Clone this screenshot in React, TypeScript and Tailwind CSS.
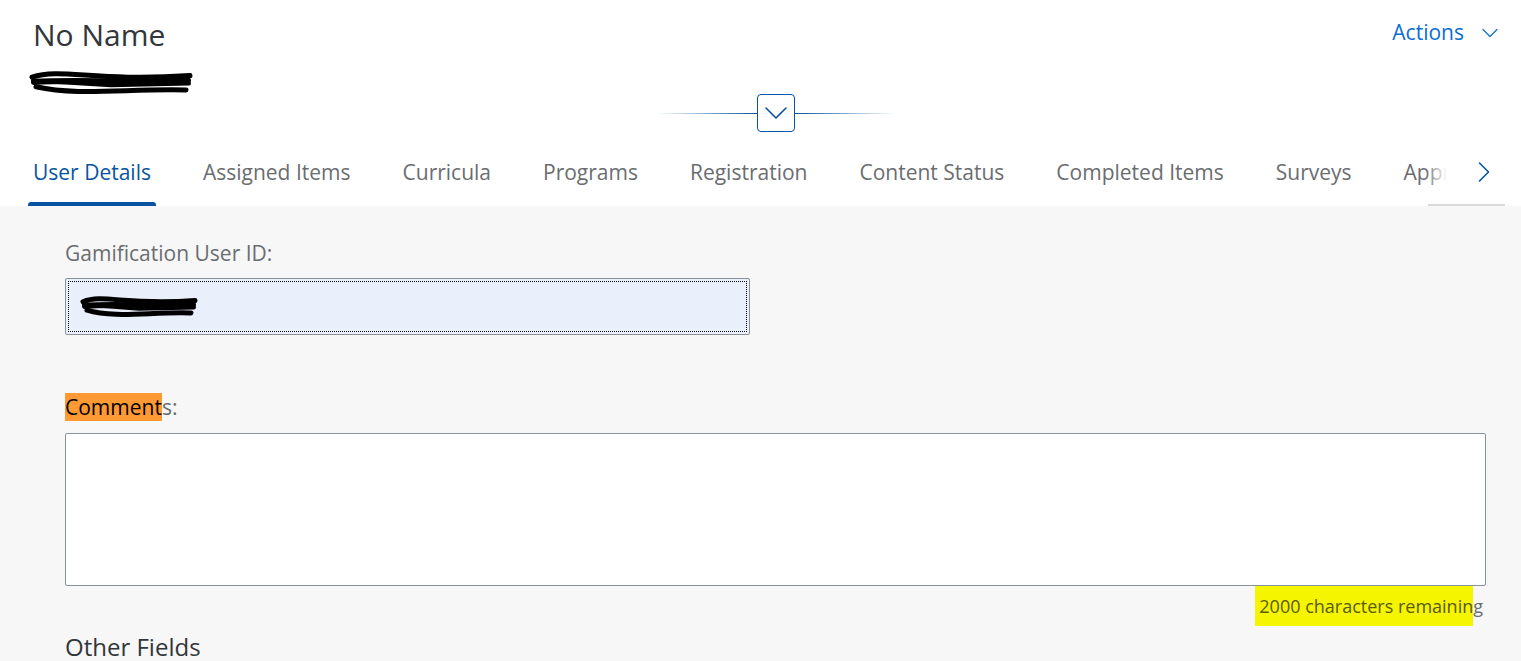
import { ChevronDown, ChevronRight } from 'lucide-react';

const tabs = [
  'User Details',
  'Assigned Items',
  'Curricula',
  'Programs',
  'Registration',
  'Content Status',
  'Completed Items',
  'Surveys',
  'Approvals',
];

const font = { fontFamily: '"Open Sans", "Noto Sans", Arial, sans-serif' };

// the black marker scribbles over redacted values
const Scribble = ({ w, h }: { w: number; h: number }) => (
  <svg width={w} height={h} viewBox={`0 0 ${w} ${h}`} fill="none">
    <path
      d={`M4 ${h * 0.35} C ${w * 0.2} ${h * 0.05}, ${w * 0.4} ${h * 0.5}, ${w - 4} ${h * 0.3}`}
      stroke="black"
      strokeWidth={5}
      strokeLinecap="round"
    />
    <path
      d={`M6 ${h * 0.5} C ${w * 0.3} ${h * 0.4}, ${w * 0.6} ${h * 0.55}, ${w - 6} ${h * 0.45}`}
      stroke="black"
      strokeWidth={6}
      strokeLinecap="round"
    />
    <path
      d={`M8 ${h * 0.65} C ${w * 0.3} ${h * 0.95}, ${w * 0.6} ${h * 0.7}, ${w - 8} ${h * 0.75}`}
      stroke="black"
      strokeWidth={5}
      strokeLinecap="round"
    />
    <path
      d={`M5 ${h * 0.45} L ${w * 0.5} ${h * 0.6} L ${w - 5} ${h * 0.55}`}
      stroke="black"
      strokeWidth={4}
      strokeLinecap="round"
    />
  </svg>
);

export default function App() {
  return (
    <div className="min-h-screen bg-[#f7f7f7] text-[#32363a]" style={font}>
      {/* header */}
      <div className="bg-white">
        <div className="flex items-start justify-between pl-[33px] pr-[17px] pt-[15px]">
          <div>
            <h1 className="text-[30px] leading-[40px] text-[#32363a]">No Name</h1>
            <div className="-ml-[5px] mt-[11px]">
              <Scribble w={166} h={32} />
            </div>
          </div>
          <button className="flex items-center gap-[12px] pt-[2px] text-[21px] text-[#0a6ed1]">
            Actions
            <ChevronDown size={28} strokeWidth={1.2} absoluteStrokeWidth />
          </button>
        </div>

        <div className="-mt-[4px] flex items-center justify-center pl-[30px]">
          <div className="h-px w-[100px] bg-gradient-to-r from-transparent to-[#0854a0]" />
          <button className="flex h-[38px] w-[38px] items-center justify-center overflow-hidden rounded-[4px] border border-[#0854a0] bg-white text-[#0854a0]">
            <ChevronDown size={40} strokeWidth={1.6} absoluteStrokeWidth className="shrink-0" />
          </button>
          <div className="h-px w-[100px] bg-gradient-to-l from-transparent to-[#0854a0]" />
        </div>

        <div className="mt-[11px] flex items-stretch pl-[28px]">
          <div className="relative flex flex-1 gap-[42px] overflow-hidden">
            {tabs.map((t, i) => (
              <div
                key={t}
                className={`relative shrink-0 px-[5px] pb-[17px] pt-[14px] text-[21px] ${
                  i === 0 ? 'text-[#0854a0]' : 'text-[#6a6d70]'
                }`}
              >
                {t}
                {i === 0 && (
                  <div className="absolute bottom-0 left-0 right-0 h-[4px] rounded-t-[3px] bg-[#0854a0]" />
                )}
              </div>
            ))}
            <div className="absolute right-0 top-0 bottom-0 w-[22px] bg-gradient-to-r from-transparent to-white" />
          </div>
          <div className="relative flex w-[74px] shrink-0 items-center">
            <ChevronRight size={36} strokeWidth={1.6} absoluteStrokeWidth className="ml-[19px] -mt-[4px] text-[#0854a0]" />
            <div className="absolute bottom-0 left-[-19px] right-[16px] h-[2px] bg-[#d9d9d9]" />
          </div>
        </div>
      </div>

      {/* content */}
      <div className="pl-[65px] pr-[35px] pt-[34px]">
        <label className="block text-[21px] leading-[26px] text-[#6a6d70]">Gamification User ID:</label>
        <div className="mt-[12px] flex h-[57px] w-[685px] items-center rounded-[2px] border border-[#89919a] bg-[#e9f0fb] p-[2px]">
          <div className="flex h-full w-full items-center border border-dotted border-black pl-[10px]">
            <Scribble w={120} h={28} />
          </div>
        </div>

        <label className="mt-[60px] block text-[21px] leading-[25px] text-[#6a6d70]">
          <span className="bg-[#ff9933] text-black">Comment</span>s:
        </label>
        <textarea className="mt-[13px] block h-[153px] w-full resize-none rounded-[2px] border border-[#89919a] bg-white" />
        <div className="flex justify-end pr-[3px]">
          <span className="text-[18px] leading-[40px] text-[#6a6d70]">
            <span className="inline-block bg-[#f5f500] pl-[4px] text-[#5a5a10]">2000 characters remainin</span>g
          </span>
        </div>

        <h2 className="mt-[6px] text-[24px] leading-[30px] text-[#32363a]">Other Fields</h2>
      </div>
    </div>
  );
}
